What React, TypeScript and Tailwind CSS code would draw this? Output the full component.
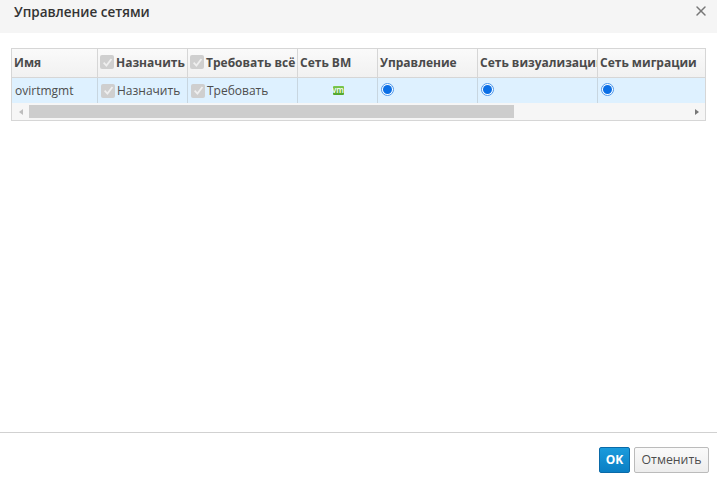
import { X } from 'lucide-react'

const font = { fontFamily: '"Open Sans", sans-serif' }

const FakeCheck = () => (
  <span className="flex h-[14px] w-[14px] shrink-0 items-center justify-center rounded-[2px] bg-[#cfcfcf]">
    <svg width="11" height="11" viewBox="0 0 10 10" fill="none">
      <path d="M1.5 5.2 L4 7.8 L8.6 1.8" stroke="#efefef" strokeWidth="1.6" />
    </svg>
  </span>
)

const Radio = () => (
  <span className="mb-[2px] flex h-[13px] w-[13px] items-center justify-center rounded-full border border-[#4d97ea] bg-white">
    <span className="h-[9px] w-[9px] rounded-full bg-[#0a6fe6]" />
  </span>
)

const VmIcon = () => (
  <span className="mb-[1px] flex h-[9px] w-[11px] items-center justify-center rounded-[1px] bg-gradient-to-b from-[#7cc84e] to-[#4fa52a] pb-[2px] text-[8px] leading-[7px] font-semibold text-white">
    vm
  </span>
)

const columns = [
  { w: 'w-[86px]', label: 'Имя' },
  { w: 'w-[90px]', label: 'Назначить', check: true },
  { w: 'w-[110px]', label: 'Требовать всё', check: true },
  { w: 'w-[80px]', label: 'Сеть ВМ' },
  { w: 'w-[100px]', label: 'Управление' },
  { w: 'w-[120px]', label: 'Сеть визуализации' },
  { w: 'flex-1', label: 'Сеть миграции' },
]

const App = () => {
  return (
    <div className="flex h-[486px] w-[717px] flex-col overflow-hidden bg-white" style={font}>
      <div className="flex h-[33px] shrink-0 items-start justify-between bg-[#f5f5f5] pt-[2px] pr-[8px] pl-[14px]">
        <span className="text-[13.5px] leading-[20px] font-semibold text-[#333]">Управление сетями</span>
        <X size={16} strokeWidth={2.2} className="mt-[1px] text-[#777]" />
      </div>

      <div className="flex-1 px-[11px] pt-[15px]">
        <div className="border border-[#d6d6d6]">
          <div className="flex h-[29px] border-b border-[#d6d6d6] bg-gradient-to-b from-[#fafafa] to-[#f1f1f1]">
            {columns.map((c) => (
              <div
                key={c.label}
                className={`${c.w} flex items-center gap-[2px] overflow-hidden border-r border-[#d6d6d6] pl-[2px] text-[12px] font-bold whitespace-nowrap text-[#4a4a4a] last:border-r-0`}
              >
                {c.check && (
                  <span className="mb-[2px] flex">
                    <FakeCheck />
                  </span>
                )}
                <span>{c.label}</span>
              </div>
            ))}
          </div>

          <div className="flex h-[25px] bg-[#def1ff] text-[12px] text-[#4d4d4d]">
            <div className="flex w-[86px] items-center border-r border-[#c8d6e0] pl-[3px]">ovirtmgmt</div>
            <div className="flex w-[90px] items-center gap-[2px] border-r border-[#c8d6e0] pl-[3px]">
              <FakeCheck />
              Назначить
            </div>
            <div className="flex w-[110px] items-center gap-[2px] border-r border-[#c8d6e0] pl-[3px]">
              <FakeCheck />
              Требовать
            </div>
            <div className="flex w-[80px] items-center justify-center border-r border-[#c8d6e0] pl-[1px]">
              <VmIcon />
            </div>
            <div className="flex w-[100px] items-center border-r border-[#c8d6e0] pl-[3px]">
              <Radio />
            </div>
            <div className="flex w-[120px] items-center border-r border-[#c8d6e0] pl-[3px]">
              <Radio />
            </div>
            <div className="flex flex-1 items-center pl-[3px]">
              <Radio />
            </div>
          </div>

          <div className="flex h-[17px] items-center bg-[#f6f6f6]">
            <div className="flex w-[17px] justify-center">
              <span className="h-0 w-0 border-y-[3.5px] border-r-[4px] border-y-transparent border-r-[#bdbdbd]" />
            </div>
            <div className="flex h-[13px] flex-1 items-center">
              <div className="h-[13px] w-[485px] bg-[#cdcdcd]" />
            </div>
            <div className="flex w-[17px] justify-center">
              <span className="h-0 w-0 border-y-[3.5px] border-l-[4px] border-y-transparent border-l-[#777]" />
            </div>
          </div>
        </div>
      </div>

      <div className="flex h-[54px] shrink-0 items-start justify-end gap-[4px] border-t border-[#d1d1d1] pt-[14px] pr-[8px]">
        <button className="h-[26px] w-[31px] rounded-[2px] border border-[#0a6aa8] bg-gradient-to-b from-[#1a9bdc] to-[#0a7fc4] text-[12px] font-bold text-white">
          OK
        </button>
        <button className="h-[26px] w-[75px] rounded-[2px] border border-[#bbb] bg-gradient-to-b from-[#fafafa] to-[#ededed] text-[12.3px] text-[#4d4d4d]">
          Отменить
        </button>
      </div>
    </div>
  )
}

export default App
